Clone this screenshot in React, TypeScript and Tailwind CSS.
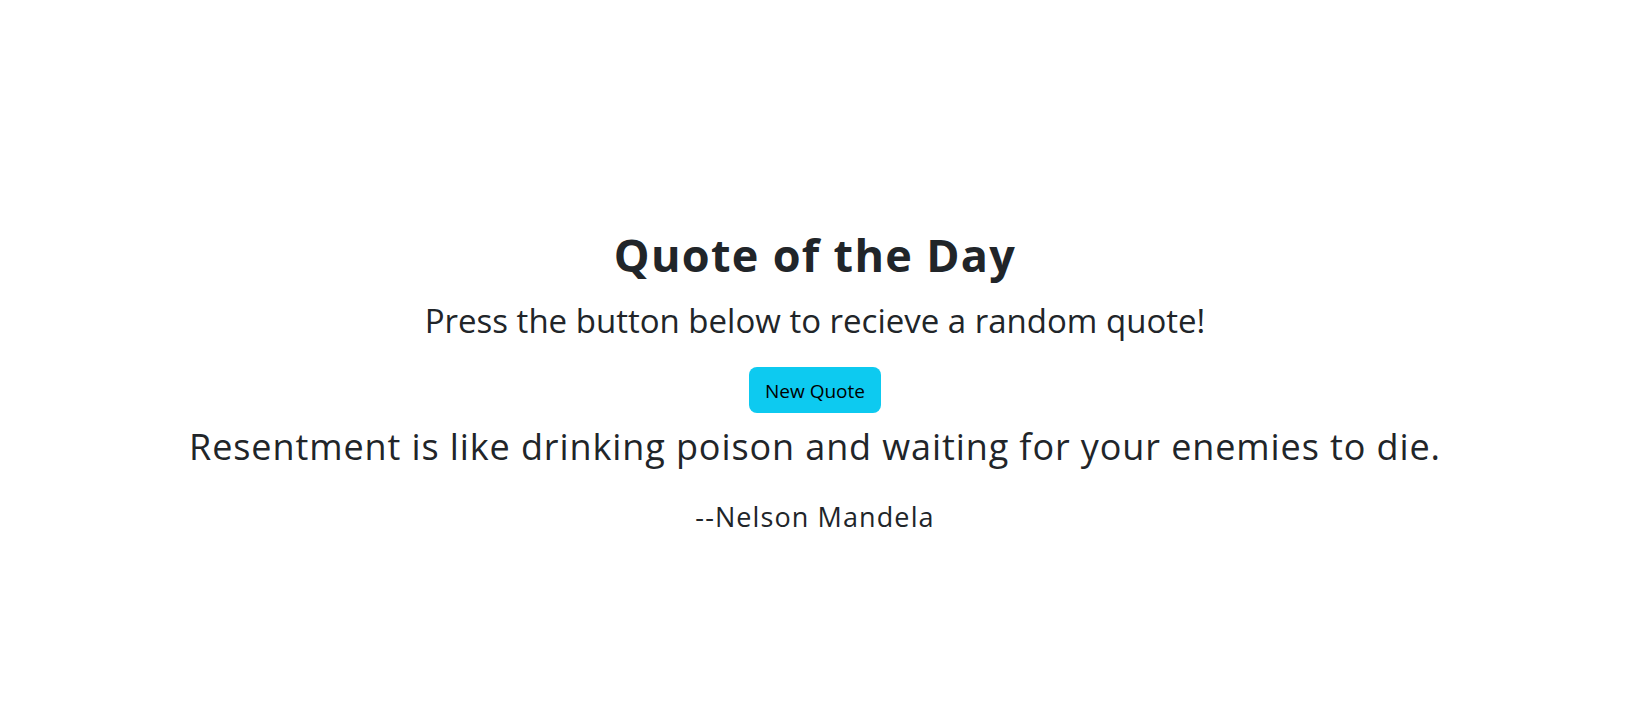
import { useState } from "react";

const QUOTES = [
  { text: "Resentment is like drinking poison and waiting for your enemies to die.", author: "Nelson Mandela" },
];

export default function App() {
  const [quote, setQuote] = useState(QUOTES[0]);

  return (
    <div className="min-h-screen bg-white font-['Open_Sans',sans-serif] text-[#212529]">
      <div className="flex w-[1630px] flex-col items-center pt-[228px] text-center">
        <h1 className="text-[45px] leading-[54px] font-bold tracking-[1.3px]">Quote of the Day</h1>
        <h3 className="mt-[19px] text-[33px] leading-[40px]">Press the button below to recieve a random quote!</h3>
        <button
          onClick={() => setQuote(QUOTES[Math.floor(Math.random() * QUOTES.length)])}
          className="mt-[26px] h-[46px] w-[132px] rounded-lg bg-[#0dcaf0] pt-[2px] text-[19px] text-black"
        >
          New Quote
        </button>
        <p className="mt-[12px] text-[36px] leading-[44px] tracking-[0.9px]">{quote.text}</p>
        <p className="mt-[31px] text-[27px] leading-[34px] tracking-[1.1px]">--{quote.author}</p>
      </div>
    </div>
  );
}
